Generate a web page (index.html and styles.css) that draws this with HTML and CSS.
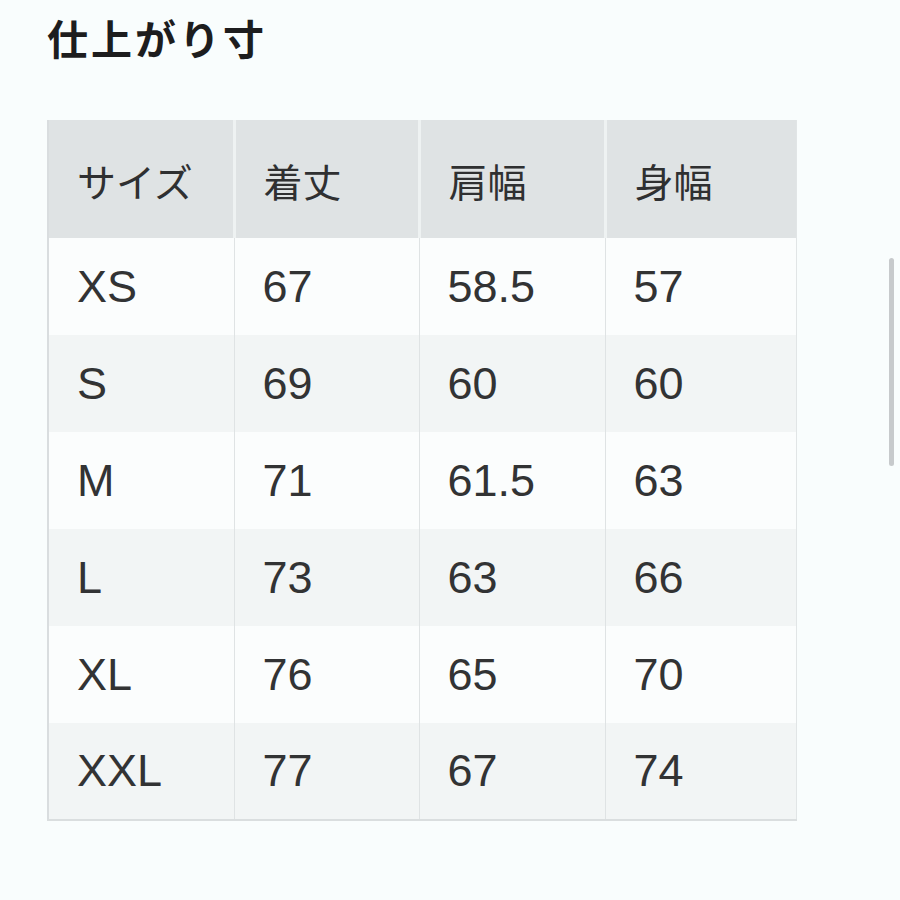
FILE: index.html
```html
<!DOCTYPE html>
<html lang="ja">
<head>
<meta charset="utf-8">
<link rel="stylesheet" href="styles.css">
</head>
<body>
<main class="page">
  <h1 class="title">仕上がり寸</h1>
  <table class="size-table">
    <colgroup>
      <col class="c1"><col class="c2"><col class="c3"><col class="c4">
    </colgroup>
    <thead>
      <tr><th>サイズ</th><th>着丈</th><th>肩幅</th><th>身幅</th></tr>
    </thead>
    <tbody>
      <tr><td>XS</td><td>67</td><td>58.5</td><td>57</td></tr>
      <tr><td>S</td><td>69</td><td>60</td><td>60</td></tr>
      <tr><td>M</td><td>71</td><td>61.5</td><td>63</td></tr>
      <tr><td>L</td><td>73</td><td>63</td><td>66</td></tr>
      <tr><td>XL</td><td>76</td><td>65</td><td>70</td></tr>
      <tr><td>XXL</td><td>77</td><td>67</td><td>74</td></tr>
    </tbody>
  </table>
</main>
<div class="scrollbar"></div>
</body>
</html>
```

FILE: styles.css
```css
html, body {
  margin: 0;
  padding: 0;
  background: #f9fdfd;
}
body {
  width: 900px;
  height: 900px;
  overflow: hidden;
  font-family: "Noto Sans CJK JP", "Noto Sans", sans-serif;
  color: #2e2f30;
}
.page {
  padding: 17px 0 0 47px;
}
.title {
  margin: 0 0 63px 0;
  font-size: 41px;
  line-height: 40px;
  font-weight: 700;
  color: #1d1d1e;
  letter-spacing: 3px;
}
.size-table {
  width: 748px;
  border-collapse: collapse;
  table-layout: fixed;
  border-left: 2px solid #d9dddf;
  border-bottom: 2px solid #dadedf;
  border-right: 1px solid #e1e5e6;
}
.c1 { width: 186px; }
.c2 { width: 185px; }
.c3 { width: 186px; }
.c4 { width: 191px; }
.size-table th {
  height: 118px;
  padding: 2px 0 0 28px;
  text-align: left;
  font-weight: 400;
  font-size: 39px;
  color: #2f3031;
  background: #dfe3e4;
  border-right: 3px solid #eef2f2;
  box-sizing: border-box;
}
.size-table th:last-child {
  border-right: none;
}
.size-table td {
  height: 97px;
  padding: 0 0 0 28px;
  font-family: "Liberation Sans", Arial, sans-serif;
  font-size: 45px;
  color: #323334;
  border-right: 1px solid #dfe3e4;
  box-sizing: border-box;
}
.size-table td:last-child {
  border-right: none;
}
.size-table tbody tr:nth-child(odd) td {
  background: #fbfdfd;
}
.size-table tbody tr:nth-child(even) td {
  background: #f2f5f5;
}
.scrollbar {
  position: absolute;
  left: 889px;
  top: 258px;
  width: 5px;
  height: 208px;
  border-radius: 3px;
  background: #c7cacc;
}
```
